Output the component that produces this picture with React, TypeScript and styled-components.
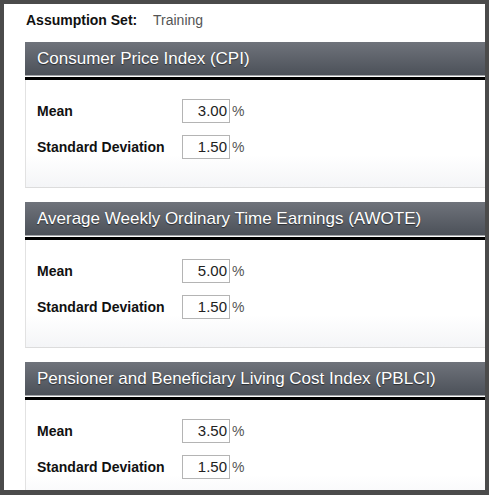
import React from "react";
import styled, { createGlobalStyle } from "styled-components";

const Global = createGlobalStyle`
  html, body { margin: 0; padding: 0; background: #ffffff; }
  body { font-family: "Liberation Sans", Arial, sans-serif; }
  * { box-sizing: border-box; }
`;

const Frame = styled.div`
  position: relative;
  width: 489px;
  height: 495px;
  border-style: solid;
  border-color: #4b4b4b;
  border-width: 4px 4px 5px 4px;
  background: #ffffff;
  overflow: hidden;
  padding: 8px 0 0 21px;
  &::before {
    content: "";
    position: absolute;
    top: -4px;
    left: 71px;
    width: 102px;
    height: 3px;
    background: #bdbdbd;
  }
`;

const SetRow = styled.div`
  display: flex;
  align-items: center;
  height: 16px;
  font-size: 14px;
  line-height: 16px;
  margin-bottom: 14px;
`;

const SetLabel = styled.span`
  font-weight: bold;
  color: #111;
  width: 128px;
  padding-left: 1px;
`;

const SetValue = styled.span`
  color: #555;
`;

const Panel = styled.section`
  margin-right: -40px;
  margin-bottom: 14px;
`;

const Header = styled.div`
  height: 34px;
  display: flex;
  align-items: center;
  padding-left: 12px;
  background: linear-gradient(#6f737b, #4c5159);
  border-bottom: 1px solid #a4a7ab;
  color: #ffffff;
  font-size: 17px;
  text-shadow: 0 1px 1px rgba(0, 0, 0, 0.55);
  white-space: nowrap;
`;

const Rule = styled.div`
  height: 4px;
  border-top: 1px solid #ffffff;
  background: #000000;
`;

const Body = styled.div`
  display: flex;
  flex-direction: column;
  gap: 12px;
  padding: 19px 0 28px 11px;
  border-left: 1px solid #e2e2e2;
  border-bottom: 1px solid #dcdcdc;
  background: linear-gradient(#ffffff 0%, #ffffff 70%, #f4f5f7 100%);
`;

const Row = styled.div`
  display: flex;
  align-items: center;
  height: 24px;
`;

const Label = styled.span`
  width: 145px;
  font-size: 14px;
  font-weight: bold;
  color: #111;
`;

const Input = styled.div`
  width: 48px;
  height: 24px;
  border: 1px solid #b4b4b4;
  background: #fff;
  font-size: 15px;
  line-height: 22px;
  text-align: right;
  padding-right: 2px;
  color: #222;
`;

const Unit = styled.span`
  margin-left: 2px;
  font-size: 14px;
  color: #555;
`;

type Field = { label: string; value: string };
type Section = { title: string; fields: Field[] };

const sections: Section[] = [
  {
    title: "Consumer Price Index (CPI)",
    fields: [
      { label: "Mean", value: "3.00" },
      { label: "Standard Deviation", value: "1.50" },
    ],
  },
  {
    title: "Average Weekly Ordinary Time Earnings (AWOTE)",
    fields: [
      { label: "Mean", value: "5.00" },
      { label: "Standard Deviation", value: "1.50" },
    ],
  },
  {
    title: "Pensioner and Beneficiary Living Cost Index (PBLCI)",
    fields: [
      { label: "Mean", value: "3.50" },
      { label: "Standard Deviation", value: "1.50" },
    ],
  },
];

export default function App() {
  return (
    <>
      <Global />
      <Frame>
        <SetRow>
          <SetLabel>Assumption Set:</SetLabel>
          <SetValue>Training</SetValue>
        </SetRow>
        {sections.map((s) => (
          <Panel key={s.title}>
            <Header>{s.title}</Header>
            <Rule />
            <Body>
              {s.fields.map((f) => (
                <Row key={f.label}>
                  <Label>{f.label}</Label>
                  <Input>{f.value}</Input>
                  <Unit>%</Unit>
                </Row>
              ))}
            </Body>
          </Panel>
        ))}
      </Frame>
    </>
  );
}
